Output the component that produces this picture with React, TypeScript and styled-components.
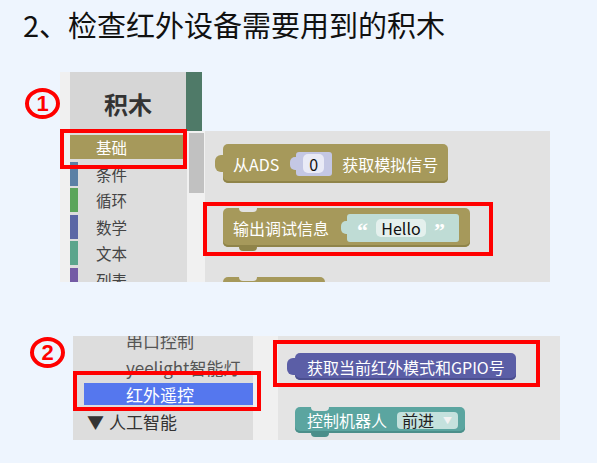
import styled, { createGlobalStyle } from "styled-components";

const GlobalStyle = createGlobalStyle`
  body {
    margin: 0;
    background: #eef5fe;
    font-family: "Noto Sans CJK SC", "Noto Sans", sans-serif;
  }
`;

const Page = styled.div`
  width: 597px;
  height: 463px;
  overflow: hidden;
`;

const Title = styled.h1`
  margin: 4px 0 0 23px;
  font-size: 29px;
  font-weight: 400;
  line-height: 40px;
  color: #111;
`;

const Figure = styled.div<{ $top: number; $left: number }>`
  display: flex;
  align-items: flex-start;
  margin-top: ${(p) => p.$top}px;
  padding-left: ${(p) => p.$left}px;
`;

const Marker = styled.div<{ $top: number; $gap: number }>`
  box-sizing: border-box;
  width: 35px;
  height: 31px;
  margin-top: ${(p) => p.$top}px;
  margin-right: ${(p) => p.$gap}px;
  border: 4px solid #ff0000;
  border-radius: 50%;
  display: flex;
  align-items: center;
  justify-content: center;
  color: #ff0000;
  font: 700 22px/1 "Liberation Sans", sans-serif;
`;

const Highlight = styled.div<{ $t: number; $r: number; $b: number; $l: number }>`
  position: absolute;
  top: ${(p) => p.$t}px;
  right: ${(p) => p.$r}px;
  bottom: ${(p) => p.$b}px;
  left: ${(p) => p.$l}px;
  border: 4px solid #ff0000;
  pointer-events: none;
  z-index: 2;
`;

/* ---------- screenshot 1 ---------- */

const Shot1 = styled.div`
  display: flex;
  height: 210px;
  overflow: hidden;
`;

const Edge = styled.div`
  width: 10px;
  flex-shrink: 0;
  background: #f0f0f0;
`;

const Main = styled.div`
  display: flex;
  flex-direction: column;
`;

const HeaderRow = styled.div`
  display: flex;
  height: 59px;
  flex-shrink: 0;
`;

const ToolboxHeader = styled.div`
  width: 116px;
  background: #d6d6d6;
  display: flex;
  align-items: center;
  justify-content: center;
  padding-top: 3px;
  box-sizing: border-box;
  font-size: 24px;
  font-weight: 700;
  color: #333;
`;

const Accent = styled.div`
  width: 16px;
  background: #4f7a68;
`;

const BodyRow = styled.div`
  display: flex;
  flex: 1;
`;

const Toolbox = styled.div`
  width: 117px;
  background: #dddddd;
  padding-top: 4px;
  box-sizing: border-box;
`;

const Category = styled.div<{ $color: string; $selected?: boolean }>`
  position: relative;
  height: 24px;
  margin: 0 2px 2.6px 0;
  padding-left: 26px;
  display: flex;
  align-items: center;
  font-size: 15.5px;
  color: ${(p) => (p.$selected ? "#fff" : "#444")};
  background: ${(p) => (p.$selected ? p.$color : "transparent")};
  box-shadow: inset 8px 0 0 ${(p) => p.$color};
`;

const Scrollbar = styled.div`
  width: 18px;
  background: #f1f1f1;
`;

const Thumb = styled.div`
  width: 15px;
  height: 60px;
  margin: 2px 1px 0 2px;
  background: #c1c1c1;
`;

const Workspace = styled.div<{ $bg: string; $w: number; $pt: number; $pl: number }>`
  width: ${(p) => p.$w}px;
  background: ${(p) => p.$bg};
  padding: ${(p) => p.$pt}px 0 0 ${(p) => p.$pl}px;
  box-sizing: border-box;
  display: flex;
  flex-direction: column;
  align-items: flex-start;
`;

/* ---------- blocks ---------- */

type Shape = "output" | "statement";

const Block = styled.div<{
  $color: string;
  $shade: string;
  $h: number;
  $shape: Shape;
  $bg: string;
  $mt?: number;
  $pl?: number;
  $pr?: number;
  $w?: number;
}>`
  position: relative;
  display: flex;
  align-items: center;
  gap: 10px;
  flex-shrink: 0;
  height: ${(p) => p.$h}px;
  ${(p) => (p.$w ? `width: ${p.$w}px; box-sizing: border-box;` : "")}
  margin-top: ${(p) => p.$mt ?? 0}px;
  padding: 0 ${(p) => p.$pr ?? 11}px 0 ${(p) => p.$pl ?? 10}px;
  background: ${(p) => p.$color};
  border-radius: 5px;
  box-shadow: inset 0 -2px 0 ${(p) => p.$shade};
  color: #fff;
  font-size: 16px;
  white-space: nowrap;

  &::before {
    content: "";
    position: absolute;
    ${(p) =>
      p.$shape === "output"
        ? `left: -8px; top: ${Math.round(p.$h / 2 - 9)}px; width: 9px; height: 17px; background: ${p.$color}; border-radius: 6px 0 0 6px;`
        : `left: 16px; top: 0; width: 18px; height: 4px; background: ${p.$bg}; border-radius: 0 0 5px 5px;`}
  }

  &::after {
    content: "";
    position: absolute;
    ${(p) =>
      p.$shape === "statement"
        ? `left: 16px; bottom: -4px; width: 18px; height: 4px; background: ${p.$shade}; border-radius: 0 0 5px 5px;`
        : "display: none;"}
  }
`;

const Slot = styled.span<{ $color: string; $h: number; $pl: number; $pr: number; $gap: number; $ml?: number }>`
  position: relative;
  display: flex;
  align-items: center;
  gap: ${(p) => p.$gap}px;
  height: ${(p) => p.$h}px;
  margin-left: ${(p) => p.$ml ?? 0}px;
  padding: 0 ${(p) => p.$pr}px 0 ${(p) => p.$pl}px;
  background: ${(p) => p.$color};
  border-radius: 3px;

  &::before {
    content: "";
    position: absolute;
    left: -6px;
    top: ${(p) => Math.round(p.$h / 2 - 7)}px;
    width: 7px;
    height: 13px;
    background: ${(p) => p.$color};
    border-radius: 5px 0 0 5px;
  }
`;

const Field = styled.span<{ $bg: string; $w: number; $h: number }>`
  display: flex;
  align-items: center;
  justify-content: center;
  width: ${(p) => p.$w}px;
  height: ${(p) => p.$h}px;
  background: ${(p) => p.$bg};
  border-radius: 5px;
  color: #111;
  font-size: 16px;
`;

const Quote = styled.span`
  color: #fff;
  font: 700 22px/1 "Liberation Serif", serif;
  margin-top: 7px;
`;

const Dropdown = styled.span`
  display: flex;
  align-items: center;
  gap: 9px;
  height: 17px;
  padding: 0 6px 0 5px;
  background: #c4e1dd;
  border-radius: 4px;
  color: #222;
  font-size: 16px;
`;

const Caret = styled.span`
  color: #f2f2f2;
  font-size: 9px;
`;

/* ---------- screenshot 2 ---------- */

const Shot2 = styled.div`
  display: flex;
  height: 104px;
  overflow: hidden;
`;

const Sidebar = styled.div`
  width: 180px;
  background: #dddddd;
`;

const SideList = styled.div`
  margin-top: -7px;
`;

const SideItem = styled.div<{ $selected?: boolean; $group?: boolean }>`
  position: relative;
  height: 22px;
  margin: 0 0 5px ${(p) => (p.$selected ? 11 : 0)}px;
  padding-left: ${(p) => (p.$group ? 14 : p.$selected ? 42 : 53)}px;
  display: flex;
  align-items: center;
  gap: 5px;
  font-size: 17px;
  white-space: nowrap;
  color: ${(p) => (p.$selected ? "#fff" : p.$group ? "#333" : "#555")};
  background: ${(p) => (p.$selected ? "#5577ee" : "transparent")};
`;

const Track = styled.div`
  width: 25px;
  background: #f0f0f0;
`;

const OLIVE = "#a6995b";
const OLIVE_DARK = "#8f8449";
const WS1 = "#e2e2e2";
const WS2 = "#e4e4e4";

const categories = [
  { name: "条件", color: "#5b80a5" },
  { name: "循环", color: "#5ba55b" },
  { name: "数学", color: "#5b67a5" },
  { name: "文本", color: "#5ba58c" },
  { name: "列表", color: "#745ba5" },
];

export default function App() {
  return (
    <Page>
      <GlobalStyle />
      <Title>2、检查红外设备需要用到的积木</Title>

      <Figure $top={28} $left={25}>
        <Marker $top={16} $gap={0}>1</Marker>
        <Shot1>
          <Edge />
          <Main>
            <HeaderRow>
              <ToolboxHeader>积木</ToolboxHeader>
              <Accent />
            </HeaderRow>
            <BodyRow>
              <Toolbox>
                <Category $color={OLIVE} $selected>
                  基础
                  <Highlight $t={-6} $r={-2} $b={-10} $l={-10} />
                </Category>
                {categories.map((c) => (
                  <Category key={c.name} $color={c.color}>
                    {c.name}
                  </Category>
                ))}
              </Toolbox>
              <Scrollbar>
                <Thumb />
              </Scrollbar>
              <Workspace $bg={WS1} $w={345} $pt={13} $pl={18}>
                <Block $color={OLIVE} $shade={OLIVE_DARK} $h={39} $shape="output" $bg={WS1} $pr={10}>
                  从ADS
                  <Slot $color="#c4c7e4" $h={24} $pl={7} $pr={8} $gap={0} $ml={7}>
                    <Field $bg="#e9eaf6" $w={21} $h={19}>0</Field>
                  </Slot>
                  获取模拟信号
                </Block>
                <Block $color={OLIVE} $shade={OLIVE_DARK} $h={39} $shape="statement" $bg={WS1} $mt={25}>
                  输出调试信息
                  <Slot $color="#bfdcd5" $h={28} $pl={10} $pr={14} $gap={8} $ml={8}>
                    <Quote>“</Quote>
                    <Field $bg="#e4f0ed" $w={50} $h={18}>Hello</Field>
                    <Quote>”</Quote>
                  </Slot>
                  <Highlight $t={-6} $r={-23} $b={-9} $l={-20} />
                </Block>
                <Block $color={OLIVE} $shade={OLIVE_DARK} $h={39} $shape="statement" $bg={WS1} $mt={30} $w={102} />
              </Workspace>
            </BodyRow>
          </Main>
        </Shot1>
      </Figure>

      <Figure $top={54} $left={30}>
        <Marker $top={1} $gap={8}>2</Marker>
        <Shot2>
          <Sidebar>
            <SideList>
              <SideItem>串口控制</SideItem>
              <SideItem>yeelight智能灯</SideItem>
              <SideItem $selected>
                红外遥控
                <Highlight $t={-12} $r={-8} $b={-6} $l={-11} />
              </SideItem>
              <SideItem $group>
                <span>▼</span>人工智能
              </SideItem>
              <SideItem>语音识别</SideItem>
            </SideList>
          </Sidebar>
          <Track />
          <Workspace $bg={WS2} $w={282} $pt={17} $pl={17}>
            <Block $color="#5b5ea6" $shade="#4b4e8f" $h={27} $shape="output" $bg={WS2} $pl={12} $pr={11}>
              获取当前红外模式和GPIO号
              <Highlight $t={-13} $r={-24} $b={-7} $l={-22} />
            </Block>
            <Block $color="#5ba5a0" $shade="#4b8f8a" $h={26} $shape="statement" $bg={WS2} $mt={27} $pl={12} $pr={7}>
              <span>控制机器人</span>
              <Dropdown>
                前进<Caret>▼</Caret>
              </Dropdown>
            </Block>
          </Workspace>
        </Shot2>
      </Figure>
    </Page>
  );
}
